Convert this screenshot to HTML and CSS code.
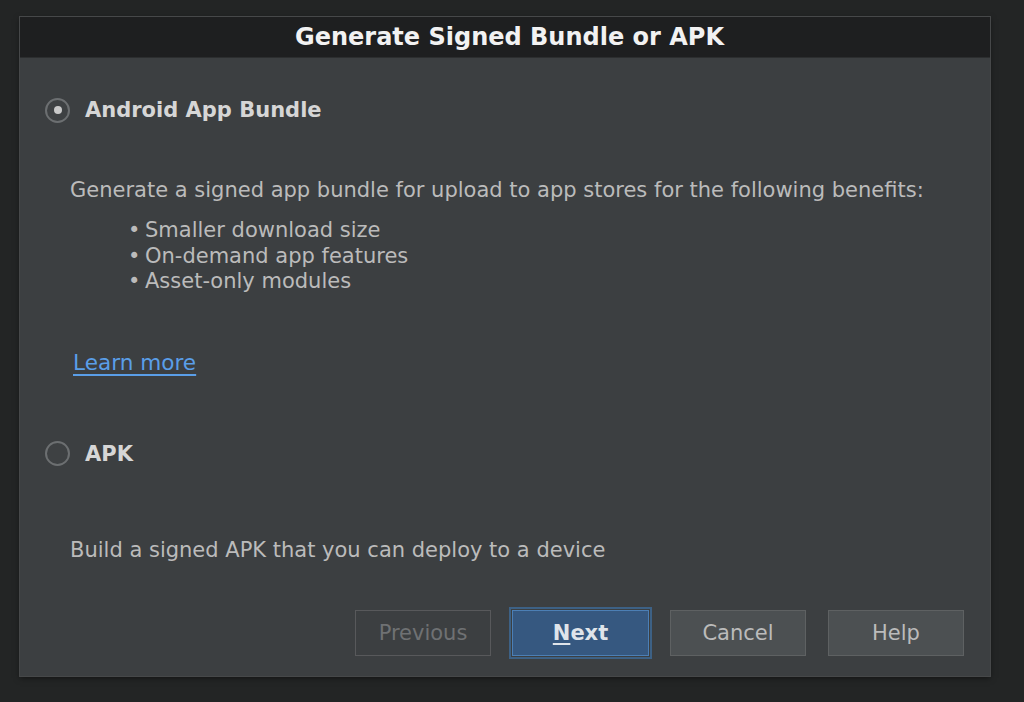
FILE: index.html
```html
<!DOCTYPE html>
<html>
<head>
<meta charset="utf-8">
<link rel="stylesheet" href="styles.css">
</head>
<body>
<div class="screen">
  <div class="dialog">
    <div class="titlebar">Generate Signed Bundle or APK</div>
    <div class="content">
      <div class="option">
        <span class="radio checked"><span class="dot"></span></span>
        <span class="option-label">Android App Bundle</span>
      </div>
      <p class="desc">Generate a signed app bundle for upload to app stores for the following benefits:</p>
      <ul class="benefits">
        <li>Smaller download size</li>
        <li>On-demand app features</li>
        <li>Asset-only modules</li>
      </ul>
      <a class="learn" href="#">Learn more</a>
      <div class="option apk">
        <span class="radio"></span>
        <span class="option-label">APK</span>
      </div>
      <p class="desc build">Build a signed APK that you can deploy to a device</p>
      <div class="buttons">
        <button class="btn disabled">Previous</button>
        <button class="btn primary"><u>N</u>ext</button>
        <button class="btn cancel">Cancel</button>
        <button class="btn">Help</button>
      </div>
    </div>
  </div>
</div>
</body>
</html>
```
FILE: styles.css
```css
html, body {
  margin: 0;
  padding: 0;
  background: #232525;
  font-family: "DejaVu Sans", sans-serif;
}
.screen {
  width: 1024px;
  height: 702px;
  padding: 17px 0 0 20px;
  box-sizing: border-box;
}
.dialog {
  width: 970px;
  height: 659px;
  background: #3c3f41;
  display: flex;
  flex-direction: column;
  box-shadow: 0 0 0 1px #464849, 0 2px 6px rgba(0,0,0,0.5);
}
.titlebar {
  height: 40px;
  background: #1e1f20;
  color: #f2f2f2;
  font-weight: bold;
  font-size: 24px;
  display: flex;
  align-items: center;
  justify-content: center;
  padding-left: 9px;
  border-bottom: 1px solid #2c2e2f;
}
.content {
  flex: 1;
  display: flex;
  flex-direction: column;
  padding: 38px 25px 0 24px;
  color: #bbbbbb;
  font-size: 21px;
}
.option {
  display: flex;
  align-items: center;
  gap: 15px;
  height: 28px;
}
.radio {
  width: 25px;
  height: 25px;
  border: 2px solid #6c6f71;
  border-radius: 50%;
  display: flex;
  align-items: center;
  justify-content: center;
  box-sizing: border-box;
  background: #3e4143;
  margin-left: 1px;
}
.radio .dot {
  width: 8px;
  height: 8px;
  border-radius: 50%;
  background: #c9c9c9;
}
.option-label {
  font-weight: bold;
  color: #d6d6d6;
  font-size: 21px;
}
.desc {
  margin: 53px 0 0 26px;
  line-height: 26px;
}
.benefits {
  margin: 15px 0 0 0;
  padding: 0 0 0 84px;
  list-style: none;
  line-height: 25.5px;
}
.benefits li::before {
  content: "•";
  display: inline-block;
  width: 17px;
}
.learn {
  margin: 55px 0 0 29px;
  color: #5a9ee8;
  text-decoration: underline;
  text-underline-offset: 4px;
  align-self: flex-start;
  line-height: 26px;
  font-size: 21.6px;
}
.option.apk {
  margin-top: 64px;
}
.desc.build {
  margin-top: 69px;
}
.buttons {
  display: flex;
  justify-content: flex-end;
  gap: 21px;
  margin-top: 47px;
  padding-right: 1px;
}
.btn {
  width: 136px;
  height: 46px;
  font-family: "DejaVu Sans", sans-serif;
  font-size: 21px;
  color: #bbbbbb;
  background: #4c5052;
  border: 1px solid #5e6162;
  padding: 0;
}
.btn.cancel {
  margin-right: 1px;
}
.btn.disabled {
  background: #3c3f41;
  color: #6f7173;
  border-color: #58595b;
}
.btn.primary {
  background: #365880;
  color: #dfe4ea;
  font-weight: bold;
  border: 1px solid #4c7fb5;
  outline: 2px solid #3d6185;
  outline-offset: 1px;
  width: 137px;
}
.btn.primary u {
  text-underline-offset: 3px;
}
```
